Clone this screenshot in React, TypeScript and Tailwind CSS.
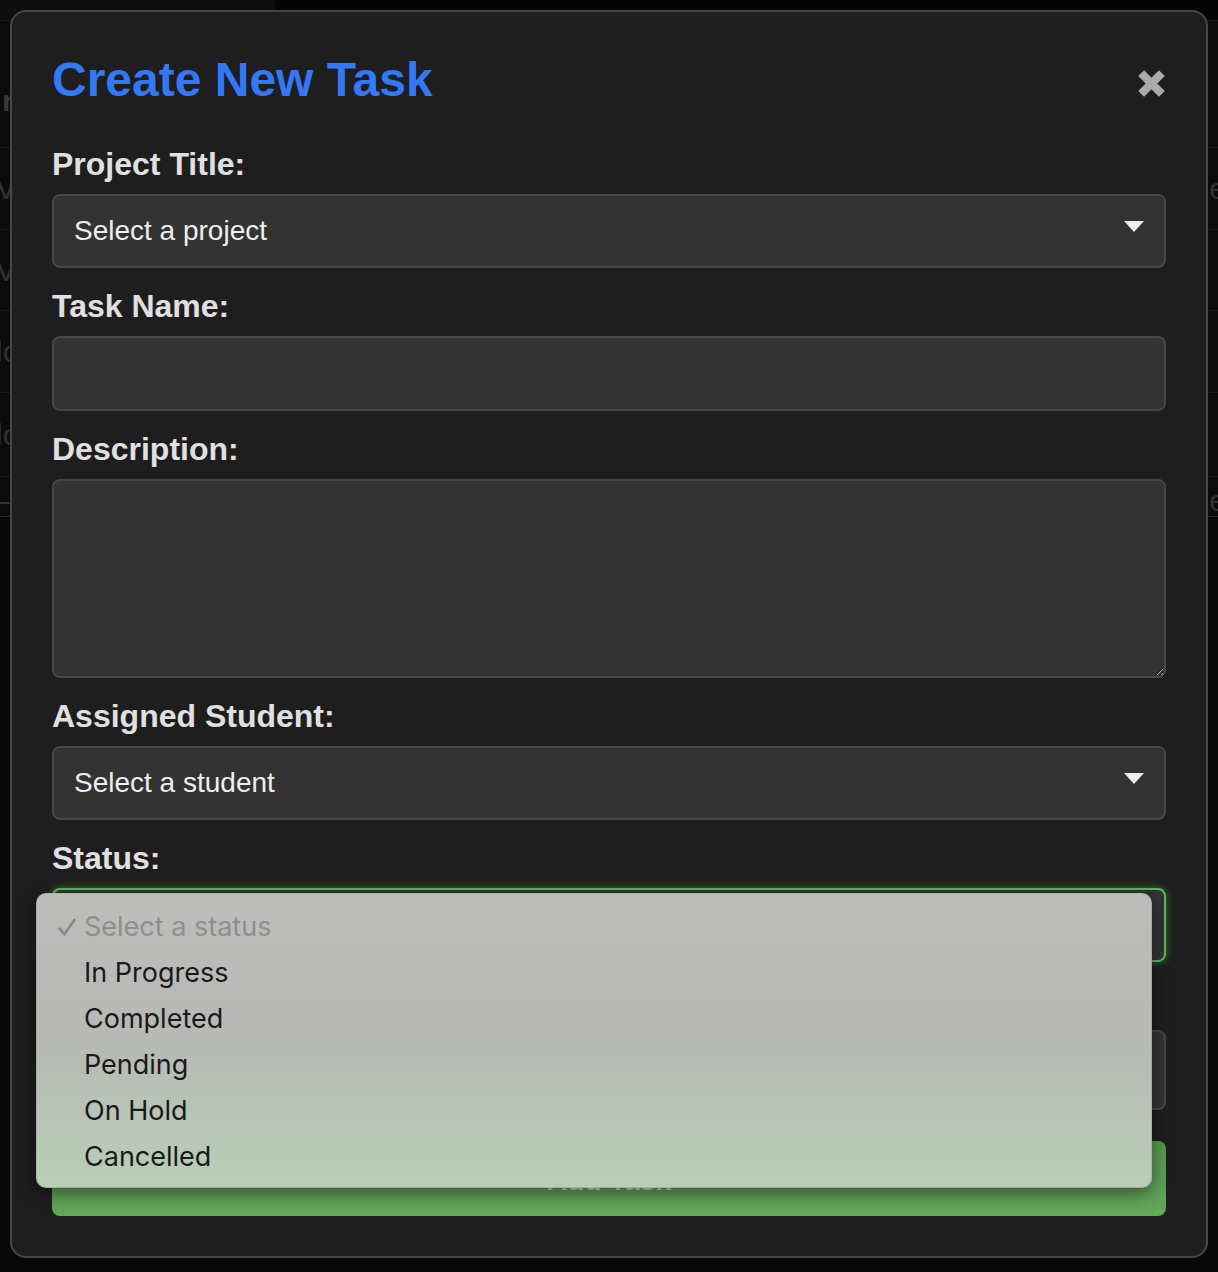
import { useState } from "react";

const statusOptions = ["In Progress", "Completed", "Pending", "On Hold", "Cancelled"];

// dimmed page behind the modal
const bgRows = [
  { h: "h-[82px]", left: "Ve", right: "e" },
  { h: "h-[81px]", left: "Ve", right: "" },
  { h: "h-[82px]", left: "lo", right: "" },
  { h: "h-[84px]", left: "lo", right: "" },
];

function Caret() {
  return (
    <svg width="20" height="11" viewBox="0 0 20 11" className="shrink-0">
      <path d="M0 0 L20 0 L10 11 Z" fill="#eeeeee" />
    </svg>
  );
}

function FakeSelect({ value, focused }: { value: string; focused?: boolean }) {
  return (
    <div
      className={
        focused
          ? "flex h-[74px] items-center justify-between rounded-[8px] border-2 border-[#5cb85c] bg-[#333333] pl-[20px] pr-[20px] shadow-[0_0_8px_rgba(92,184,92,0.55)]"
          : "flex h-[74px] items-center justify-between rounded-[8px] border-2 border-[#474747] bg-[#333333] pl-[20px] pr-[20px]"
      }
    >
      <span className="text-[28px] text-[#eeeeee]">{value}</span>
      <div className="-mt-[10px]">
        <Caret />
      </div>
    </div>
  );
}

function Label({ children }: { children: React.ReactNode }) {
  return (
    <label className="mb-[12px] block text-[32px] font-bold leading-[36px] text-[#e0e0e0]">
      {children}
    </label>
  );
}

export default function App() {
  const [name, setName] = useState("");
  const [desc, setDesc] = useState("");

  return (
    <div
      className="relative h-[1272px] w-full overflow-hidden bg-[#080808]"
      style={{ fontFamily: '"Liberation Sans", Arial, sans-serif' }}
    >
      {/* background page */}
      <div className="flex h-[21px] border-b border-[#1a1a1a]">
        <div className="w-[275px] bg-[#0e0e0e]" />
        <div className="flex-1 bg-[#050505]" />
      </div>
      <div className="flex h-[127px] items-end border-b border-[#1a1a1a] bg-[#0b0b0b] pb-[24px] pl-[2px] text-[30px] font-bold text-[#3a3a3a]">
        rr
      </div>
      {bgRows.map((r, i) => (
        <div
          key={i}
          className={`flex ${r.h} items-center justify-between border-b border-[#1a1a1a] bg-[#0b0b0b] text-[30px] text-[#333333]`}
        >
          <span className="-ml-[4px]">{r.left}</span>
          <span className="mr-[-8px]">{r.right}</span>
        </div>
      ))}
      <div className="flex h-[40px] items-end justify-between border-b border-[#2a2a2a] bg-[#0b0b0b] text-[30px] leading-[30px] text-[#333333]">
        <span>—</span>
        <span className="mr-[-8px]">e</span>
      </div>

      {/* modal overlay */}
      <div className="absolute inset-0 flex items-start justify-center pt-[10px]">
        <div className="w-[1198px] rounded-[16px] border-2 border-[#474747] bg-[#1e1e1e] p-[40px]">
          <div className="mb-[39px] flex items-center justify-between">
            <h2 className="text-[48px] font-bold leading-[55px] text-[#3478f6]">Create New Task</h2>
            <svg width="29" height="29" viewBox="0 0 28 28" className="mt-[8px]">
              <path d="M4 4 L24 24 M24 4 L4 24" stroke="#aaaaaa" strokeWidth="8" strokeLinecap="butt" />
            </svg>
          </div>

          <Label>Project Title:</Label>
          <FakeSelect value="Select a project" />

          <div className="mt-[20px]">
            <Label>Task Name:</Label>
            <input
              value={name}
              onChange={(e) => setName(e.target.value)}
              className="block h-[75px] w-full rounded-[8px] border-2 border-[#474747] bg-[#333333] px-[20px] text-[28px] text-[#eeeeee] outline-none"
            />
          </div>

          <div className="mt-[20px]">
            <Label>Description:</Label>
            <textarea
              value={desc}
              onChange={(e) => setDesc(e.target.value)}
              className="block h-[199px] w-full resize-y rounded-[8px] border-2 border-[#474747] bg-[#333333] px-[20px] py-[16px] text-[28px] text-[#eeeeee] outline-none"
            />
          </div>

          <div className="mt-[20px]">
            <Label>Assigned Student:</Label>
            <FakeSelect value="Select a student" />
          </div>

          <div className="relative mt-[20px]">
            <Label>Status:</Label>
            <div className="relative">
              <FakeSelect value="Select a status" focused />

              {/* open native-style menu */}
              <div
                className="absolute left-[-16px] top-[5px] z-10 h-[295px] w-[1116px] rounded-[10px] border border-black/10 bg-gradient-to-b from-[#bdbdbb] via-[#b7b9b5] to-[#b8cfb6] pt-[10px] shadow-[0_6px_18px_rgba(0,0,0,0.45)]"
                style={{ fontFamily: "Inter, 'Noto Sans', sans-serif" }}
              >
                <div className="relative pl-[47px] text-[27px] leading-[46px] text-[#8e8f8d]">
                  <svg width="20" height="20" viewBox="0 0 20 20" className="absolute left-[20px] top-[13px]">
                    <path d="M2 11 L7.5 17 L18 2" fill="none" stroke="#8a8b89" strokeWidth="2.8" />
                  </svg>
                  Select a status
                </div>
                {statusOptions.map((s) => (
                  <div key={s} className="pl-[47px] text-[27px] leading-[46px] text-[#1a1a1a]">
                    {s}
                  </div>
                ))}
              </div>
            </div>
          </div>

          <div className="mt-[20px]">
            <Label>Due Date:</Label>
            <div className="h-[80px] rounded-[8px] border-2 border-[#474747] bg-[#333333]" />
          </div>

          <button className="mt-[31px] flex h-[75px] w-full items-end justify-center rounded-[8px] bg-gradient-to-b from-[#57954f] to-[#63a95a] pb-[21px] text-[28px] font-bold leading-none text-[#d8d8d8]">
            Add Task
          </button>
        </div>
      </div>
    </div>
  );
}
